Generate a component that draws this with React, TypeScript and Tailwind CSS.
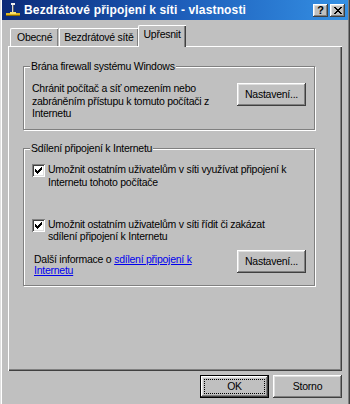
import React from "react";

const raised =
  "shadow-[inset_-1px_-1px_#404040,inset_1px_1px_#ffffff,inset_-2px_-2px_#808080,inset_2px_2px_#dfdfdf]";

function Check() {
  const px: [number, number][] = [
    [6, 0],
    [5, 1], [6, 1],
    [0, 2], [4, 2], [5, 2], [6, 2],
    [0, 3], [1, 3], [3, 3], [4, 3], [5, 3],
    [0, 4], [1, 4], [2, 4], [3, 4], [4, 4],
    [1, 5], [2, 5], [3, 5],
    [2, 6],
  ];
  return (
    <div className="w-[13px] h-[13px] bg-white shrink-0 relative shadow-[inset_1px_1px_#808080,inset_-1px_-1px_#ffffff,inset_2px_2px_#404040,inset_-2px_-2px_#dfdfdf]">
      <svg width="13" height="13" className="absolute left-0 top-0" shapeRendering="crispEdges">
        {px.map(([x, y], i) => (
          <rect key={i} x={3 + x} y={3 + y} width="1" height="1" fill="#000" />
        ))}
      </svg>
    </div>
  );
}

function Btn({ children, def }: { children: React.ReactNode; def?: boolean }) {
  if (def) {
    return (
      <div className="w-[69px] h-[23px] border border-black">
        <div className={"w-full h-full flex items-center justify-center p-[3px] " + raised}>
          <div className="w-full h-full flex items-center justify-center outline-1 outline-dotted outline-black -outline-offset-1">
            {children}
          </div>
        </div>
      </div>
    );
  }
  return (
    <div className={"w-[69px] h-[23px] flex items-center justify-center bg-[#c0c0c0] " + raised}>
      {children}
    </div>
  );
}

function Group({ label, className, children }: { label: string; className: string; children: React.ReactNode }) {
  return (
    <div className={"relative w-[292px] border border-[#808080] shadow-[1px_1px_0_#ffffff,inset_1px_1px_0_#ffffff] " + className}>
      <div className="absolute left-[6px] -top-[8px] px-[1px] bg-[#c0c0c0] leading-[14px]">{label}</div>
      {children}
    </div>
  );
}

export default function App() {
  return (
    <div
      className="w-[350px] h-[404px] overflow-hidden bg-[#c0c0c0] flex flex-col text-black text-[10.5px] tracking-[-0.25px] shadow-[inset_1px_0_#dfdfdf,inset_2px_0_#ffffff,inset_-1px_0_#404040,inset_-2px_0_#808080]"
      style={{ fontFamily: '"Liberation Sans", Arial, sans-serif' }}
    >
      {/* Title bar */}
      <div className="mx-[2px] h-[20px] flex items-center bg-gradient-to-r from-[#0c2a78] via-[#1d5cb8] to-[#3590e4] pl-[3px] pr-[3px]">
        <svg width="16" height="16" viewBox="0 0 16 16" shapeRendering="crispEdges" className="shrink-0">
          <rect x="7" y="2" width="2" height="10" fill="#d8d8d8" />
          <rect x="8" y="2" width="1" height="10" fill="#606060" />
          <rect x="6" y="1" width="4" height="2" fill="#f0f0f0" />
          <rect x="1" y="11" width="14" height="3" fill="#e0b820" />
          <rect x="1" y="13" width="14" height="1" fill="#8a6a00" />
          <rect x="5" y="10" width="6" height="2" fill="#f8e070" />
        </svg>
        <div className="ml-[3px] text-white font-bold text-[12px] tracking-[0.15px] whitespace-nowrap">
          Bezdrátové připojení k síti - vlastnosti
        </div>
        <div className="ml-auto flex gap-[2px]">
          <div className={"w-[15px] h-[13px] bg-[#c0c0c0] flex items-center justify-center font-bold text-[11px] leading-none " + raised}>
            ?
          </div>
          <div className={"w-[15px] h-[13px] bg-[#c0c0c0] flex items-center justify-center " + raised}>
            <svg width="8" height="7" viewBox="0 0 8 7" shapeRendering="crispEdges">
              <path d="M0 0h2v1H0zM6 0h2v1H6zM1 1h2v1H1zM5 1h2v1H5zM2 2h4v1H2zM3 3h2v1H3zM2 4h4v1H2zM1 5h2v1H1zM5 5h2v1H5zM0 6h2v1H0zM6 6h2v1H6z" fill="#000" />
            </svg>
          </div>
        </div>
      </div>

      {/* Tabs */}
      <div className="mt-[5px] ml-[10px] flex items-end h-[21px] relative z-10">
        <div className="h-[18px] px-[6px] flex items-center border-t border-l border-white rounded-tl-[2px] shadow-[inset_-1px_0_#808080]">
          Obecné
        </div>
        <div className="h-[18px] px-[5px] flex items-center border-t border-white shadow-[inset_-1px_0_#404040,inset_-2px_0_#808080,inset_1px_0_#ffffff] ml-[1px]">
          Bezdrátové sítě
        </div>
        <div className="h-[22px] -mb-[1px] px-[5px] pb-[3px] flex items-center bg-[#c0c0c0] border-t border-l border-white rounded-tl-[2px] shadow-[inset_-1px_0_#404040,inset_-2px_0_#808080] -ml-[1px]">
          Upřesnit
        </div>
      </div>

      {/* Panel */}
      <div className="mx-[8px] h-[325px] border-t border-l border-white shadow-[inset_-1px_-1px_#404040,inset_-2px_-2px_#808080] pl-[14px] pt-[19px]">
        <Group label="Brána firewall systému Windows" className="h-[64px]">
          <div className="flex pl-[8px] pr-[8px] pt-[15px]">
            <div className="leading-[12.5px] flex-1">
              Chránit počítač a síť omezením nebo
              <br />
              zabráněním přístupu k tomuto počítači z
              <br />
              Internetu
            </div>
            <div className="pt-[1px]">
              <Btn>Nastavení...</Btn>
            </div>
          </div>
        </Group>

        <Group label="Sdílení připojení k Internetu" className="h-[138px] mt-[18px]">
          <div className="pl-[8px] pr-[8px] pt-[15px] flex flex-col">
            <div className="flex gap-[3px] items-start">
              <Check />
              <div className="leading-[12.5px] -mt-[1px]">
                Umožnit ostatním uživatelům v síti využívat připojení k
                <br />
                Internetu tohoto počítače
              </div>
            </div>
            <div className="flex gap-[3px] items-start mt-[31px]">
              <Check />
              <div className="leading-[12px] -mt-[1px]">
                Umožnit ostatním uživatelům v síti řídit či zakázat
                <br />
                sdílení připojení k Internetu
              </div>
            </div>
            <div className="flex mt-[8px]">
              <div className="flex-1 leading-[11px] pl-[2px] pt-[4px]">
                Další informace o{" "}
                <span className="text-[#0000ee] underline">sdílení připojení k</span>
                <br />
                <span className="text-[#0000ee] underline">Internetu</span>
              </div>
              <Btn>Nastavení...</Btn>
            </div>
          </div>
        </Group>
      </div>

      {/* Bottom buttons */}
      <div className="flex justify-end gap-[4px] mr-[8px] mt-[4px]">
        <Btn def>OK</Btn>
        <Btn>Storno</Btn>
      </div>
    </div>
  );
}
